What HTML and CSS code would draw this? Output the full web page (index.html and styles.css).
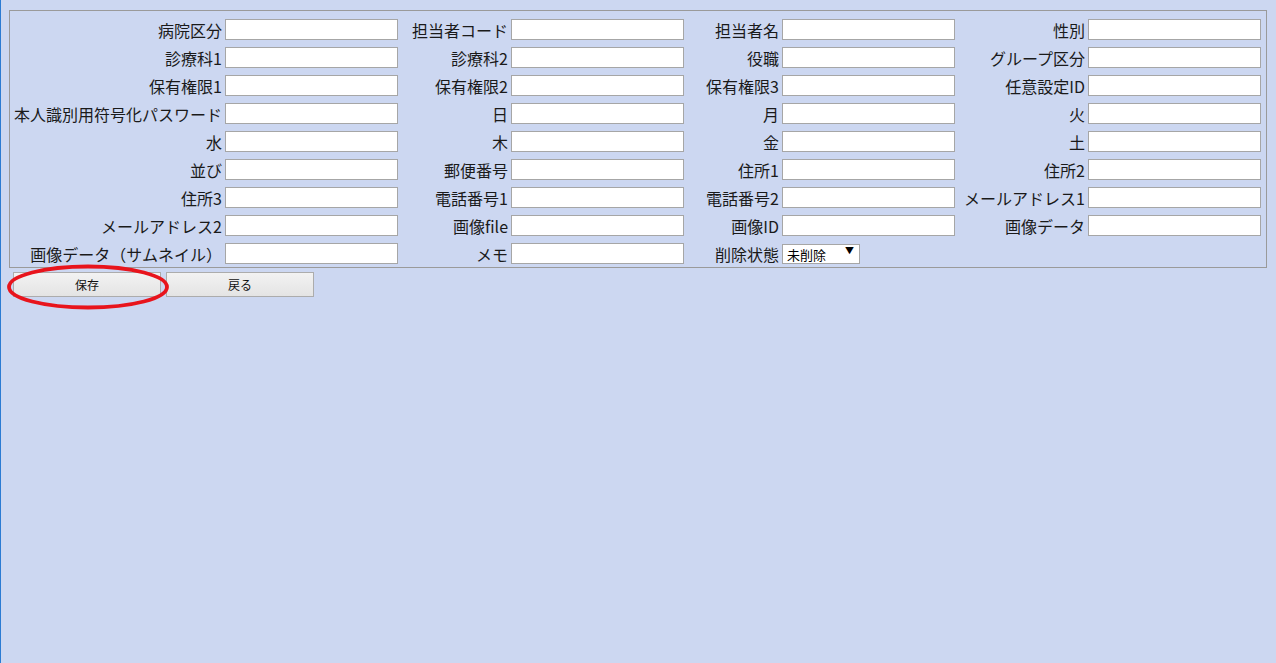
FILE: index.html
```html
<!DOCTYPE html>
<html lang="ja">
<head>
  <meta charset="UTF-8" />
  <title>担当者登録</title>
  <link rel="stylesheet" href="styles.css">
</head>
<body>
  <div class="panel">
    <div class="form-grid">
      <label>病院区分</label><input type="text" />
      <label>担当者コード</label><input type="text" />
      <label>担当者名</label><input type="text" />
      <label>性別</label><input type="text" />

      <label>診療科1</label><input type="text" />
      <label>診療科2</label><input type="text" />
      <label>役職</label><input type="text" />
      <label>グループ区分</label><input type="text" />

      <label>保有権限1</label><input type="text" />
      <label>保有権限2</label><input type="text" />
      <label>保有権限3</label><input type="text" />
      <label>任意設定ID</label><input type="text" />

      <label>本人識別用符号化パスワード</label><input type="text" />
      <label>日</label><input type="text" />
      <label>月</label><input type="text" />
      <label>火</label><input type="text" />

      <label>水</label><input type="text" />
      <label>木</label><input type="text" />
      <label>金</label><input type="text" />
      <label>土</label><input type="text" />

      <label>並び</label><input type="text" />
      <label>郵便番号</label><input type="text" />
      <label>住所1</label><input type="text" />
      <label>住所2</label><input type="text" />

      <label>住所3</label><input type="text" />
      <label>電話番号1</label><input type="text" />
      <label>電話番号2</label><input type="text" />
      <label>メールアドレス1</label><input type="text" />

      <label>メールアドレス2</label><input type="text" />
      <label>画像file</label><input type="text" />
      <label>画像ID</label><input type="text" />
      <label>画像データ</label><input type="text" />

      <label>画像データ（サムネイル）</label><input type="text" />
      <label>メモ</label><input type="text" />
      <label>削除状態</label>
      <div class="cell-select">
        <span class="select-wrap">
          <select>
            <option>未削除</option>
            <option>削除</option>
          </select>
        </span>
      </div>
      <div></div><div></div>
    </div>
  </div>

  <div class="button-group">
    <button class="btn-save">保存</button>
    <button>戻る</button>
    <svg class="mark" width="166" height="48" viewBox="0 0 166 48">
      <ellipse cx="83" cy="24" rx="79" ry="20.5" fill="none" stroke="#e8141c" stroke-width="3.8" />
    </svg>
  </div>
</body>
</html>
```

FILE: styles.css
```css
body {
  margin: 0;
  min-height: 663px;
  background-color: #ccd7f1;
  border-left: 1px solid #2b7bd3;
  font-family: "Noto Sans CJK JP", "Noto Sans", sans-serif;
  color: #1a1a1a;
}

.panel {
  margin: 10px 9px 0 8px;
  border: 1px solid #9a9a9a;
  padding: 8px 5px 3px 2px;
}

.form-grid {
  display: grid;
  grid-template-columns: 213px 173px 113px 173px 98px 173px 133px 173px;
  grid-auto-rows: 21px;
  row-gap: 7px;
  align-items: center;
}

.form-grid label {
  text-align: right;
  padding-right: 3px;
  font-size: 16px;
  line-height: 20px;
  white-space: nowrap;
}

.form-grid input {
  box-sizing: border-box;
  width: 173px;
  height: 21px;
  margin: 0;
  padding: 1px 3px;
  border: 1px solid #a6a6a6;
  background: white;
  font-size: 13px;
}

.cell-select {
  display: flex;
  align-items: center;
}

.select-wrap {
  position: relative;
  display: inline-block;
  margin-top: -2px;
}

.select-wrap select {
  appearance: none;
  -webkit-appearance: none;
  box-sizing: border-box;
  width: 78px;
  height: 20px;
  margin: 0;
  padding: 0 0 0 4px;
  border: 1px solid #a6a6a6;
  border-radius: 0;
  background: white;
  font-family: "Noto Sans CJK JP", sans-serif;
  font-size: 13px;
  color: #000;
}

.select-wrap::after {
  content: '\25BC';
  position: absolute;
  right: 6px;
  top: 4px;
  font-size: 9px;
  line-height: 12px;
  color: #000;
  pointer-events: none;
}

.button-group {
  position: relative;
  display: flex;
  gap: 5px;
  margin: 4px 0 0 12px;
}

button {
  box-sizing: border-box;
  width: 148px;
  height: 25px;
  margin: 0;
  border: 1px solid #acacac;
  background: linear-gradient(#f2f2f2, #e4e4e4);
  font-family: "Noto Sans CJK JP", sans-serif;
  font-size: 12px;
  color: #111;
  cursor: pointer;
}

.mark {
  position: absolute;
  left: -8px;
  top: -9px;
  pointer-events: none;
}
```
